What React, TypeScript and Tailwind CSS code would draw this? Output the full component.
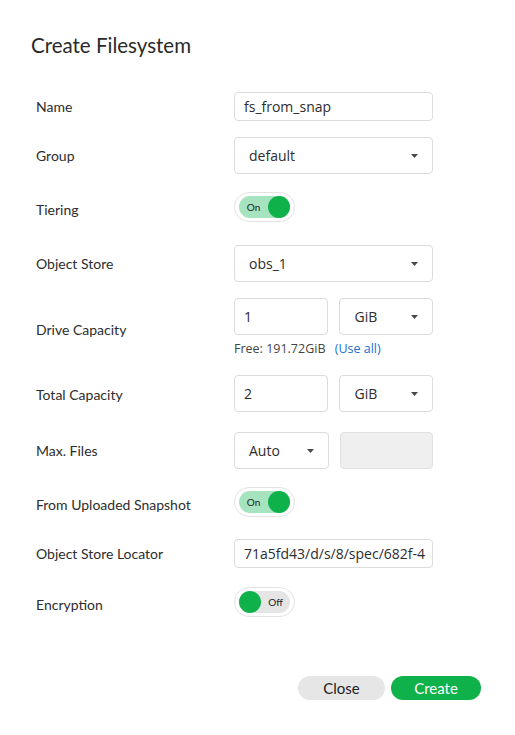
import React from "react";

const label = "font-['Lato',sans-serif] text-[14px] text-[#2d2d2d]";
const inputText = "font-['Open_Sans',sans-serif] text-[14px] text-[#2d2d2d]";

function Caret() {
  return (
    <svg width="7" height="4" viewBox="0 0 7 4" className="shrink-0">
      <path d="M0 0h7L3.5 4z" fill="#4a4a4a" />
    </svg>
  );
}

function Select({ value, className = "" }: { value: string; className?: string }) {
  return (
    <div
      className={`flex h-[37px] items-center justify-between rounded-[4px] border border-[#dcdcdc] bg-white pl-[14px] pr-[14px] ${inputText} ${className}`}
    >
      <span>{value}</span>
      <Caret />
    </div>
  );
}

function Toggle({ on }: { on: boolean }) {
  return (
    <div className="flex h-[30px] w-[61px] items-center rounded-full border border-[#e3e3e3] bg-white px-[4px]">
      <div
        className={`flex h-[22px] w-full items-center rounded-full ${
          on ? "flex-row bg-[#a6e3bf]" : "flex-row-reverse bg-[#e5e5e5]"
        }`}
      >
        <span className="flex-1 text-center font-['Lato',sans-serif] text-[10px] text-[#222]">
          {on ? "On" : "Off"}
        </span>
        <span className="h-[22px] w-[22px] rounded-full bg-[#0fb14a]" />
      </div>
    </div>
  );
}

function Row({
  name,
  children,
  className = "",
  labelClass = "",
}: {
  name: string;
  children: React.ReactNode;
  className?: string;
  labelClass?: string;
}) {
  return (
    <div className={`flex items-center ${className}`}>
      <div className={`w-[198px] shrink-0 ${label} ${labelClass}`}>{name}</div>
      <div className="w-[199px]">{children}</div>
    </div>
  );
}

export default function App() {
  return (
    <div className="h-[735px] w-[515px] bg-white">
      <div className="pl-[31px] pt-[31px]">
        <h1 className="font-['Lato',sans-serif] text-[20.5px] leading-[28px] text-[#2a2a2a]">
          Create Filesystem
        </h1>
      </div>

      <div className="mt-[33px] flex flex-col pl-[36px]">
        <Row name="Name">
          <div className={`flex h-[29px] items-center rounded-[4px] border border-[#dcdcdc] px-[9px] ${inputText}`}>
            fs_from_snap
          </div>
        </Row>

        <Row name="Group" className="mt-[16px]">
          <Select value="default" />
        </Row>

        <Row name="Tiering" className="mt-[18px]" labelClass="pt-[5px]">
          <Toggle on />
        </Row>

        <Row name="Object Store" className="mt-[23px]">
          <Select value="obs_1" />
        </Row>

        <Row name="Drive Capacity" className="mt-[16px]" labelClass="pt-[3px]">
          <div className="flex gap-[11px]">
            <div className={`flex h-[37px] w-[95px] items-center rounded-[4px] border border-[#dcdcdc] px-[9px] ${inputText}`}>
              1
            </div>
            <Select value="GiB" className="w-[94px]" />
          </div>
          <div className="mt-[6px] font-['Open_Sans',sans-serif] text-[12.5px] leading-[16px] text-[#444]">
            Free: 191.72GiB <span className="ml-[6px] text-[#1a6fd0]">(Use all)</span>
          </div>
        </Row>

        <Row name="Total Capacity" className="mt-[18px]" labelClass="pt-[2px]">
          <div className="flex gap-[11px]">
            <div className={`flex h-[37px] w-[95px] items-center rounded-[4px] border border-[#dcdcdc] px-[9px] ${inputText}`}>
              2
            </div>
            <Select value="GiB" className="w-[94px]" />
          </div>
        </Row>

        <Row name="Max. Files" className="mt-[20px]">
          <div className="flex gap-[11px]">
            <Select value="Auto" className="w-[95px]" />
            <div className="h-[37px] w-[94px] rounded-[4px] border border-[#e0e0e0] bg-[#efefef]" />
          </div>
        </Row>

        <Row name="From Uploaded Snapshot" className="mt-[18px]" labelClass="pt-[5px]">
          <Toggle on />
        </Row>

        <Row name="Object Store Locator" className="mt-[22px]">
          <div className={`flex h-[29px] items-center overflow-hidden whitespace-nowrap rounded-[4px] border border-[#dcdcdc] px-[9px] ${inputText}`}>
            71a5fd43/d/s/8/spec/682f-4
          </div>
        </Row>

        <Row name="Encryption" className="mt-[19px]" labelClass="pt-[5px]">
          <Toggle on={false} />
        </Row>
      </div>

      <div className="mt-[59px] flex justify-end gap-[6px] pr-[34px]">
        <button className="h-[24px] w-[87px] rounded-full bg-[#e6e6e6] font-['Lato',sans-serif] text-[15px] text-[#222]">
          Close
        </button>
        <button className="h-[24px] w-[90px] rounded-full bg-[#0fb14a] font-['Lato',sans-serif] text-[15px] text-white">
          Create
        </button>
      </div>
    </div>
  );
}
